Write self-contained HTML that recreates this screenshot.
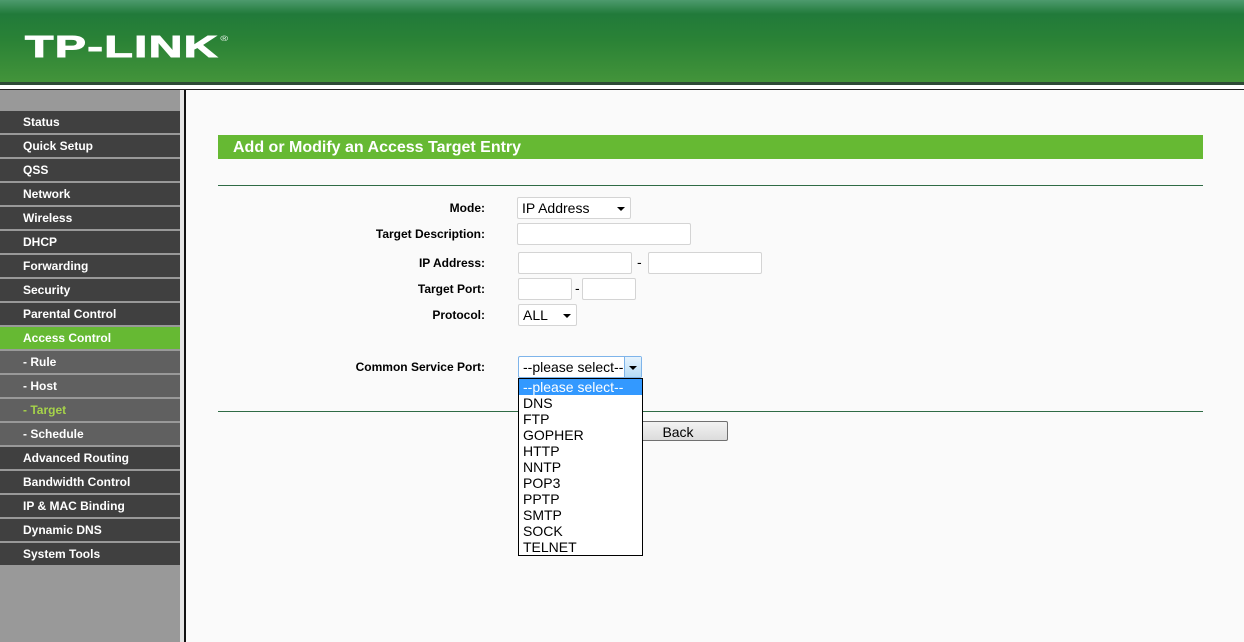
<!DOCTYPE html>
<html><head><meta charset="utf-8"><style>
*{margin:0;padding:0;box-sizing:border-box}
body{width:1244px;height:642px;overflow:hidden;background:#fafafa;font-family:"Liberation Sans",Arial,sans-serif;position:relative}
#hdr{position:absolute;left:0;top:0;width:1244px;height:82px;background:linear-gradient(#4d9a6e 0px,#217a3a 14px,#2a8236 40px,#43943a 82px)}
#logo{position:absolute;left:25px;top:29px;color:#fff;font:bold 31px "Liberation Sans",sans-serif;letter-spacing:1px;-webkit-text-stroke:1px #fff;transform:scaleX(1.5);transform-origin:left;white-space:nowrap}
#logo sup{font-size:7px;font-weight:normal;-webkit-text-stroke:0;vertical-align:16px;margin-left:1px}
#l1{position:absolute;top:82px;left:0;width:1244px;height:3px;background:#2d4a36}
#l2{position:absolute;top:85px;left:0;width:1244px;height:4px;background:#fff}
#l3{position:absolute;top:89px;left:0;width:1244px;height:1px;background:#222}
#side{position:absolute;left:0;top:90px;width:180px;height:552px;background:#999}
#sep1{position:absolute;left:180px;top:90px;width:4px;height:552px;background:#e4e4e4}
#sep2{position:absolute;left:184px;top:90px;width:2px;height:552px;background:#111}
.m{position:absolute;left:0;width:180px;height:22px;background:#404040;color:#fff;font-weight:bold;font-size:12px;line-height:22px;padding-left:23px}
.s{background:#606060}
.a{background:#66b933}
.t{color:#a6d34a}
#title{position:absolute;left:218px;top:135px;width:985px;height:24px;background:#66b933;color:#fff;font-weight:bold;font-size:16px;line-height:25px;padding-left:15px}
.hr{position:absolute;left:218px;width:985px;height:1px;background:#2f6b45}
.lb{position:absolute;right:759px;font-weight:bold;font-size:12px;color:#000}
.in{position:absolute;height:22px;border:1px solid #d4d4d4;background:#fff;border-radius:2px}
.sel{position:absolute;height:22px;border:1px solid #d4d4d4;background:#fff;font-size:14px;line-height:20px;padding-left:4px;border-radius:2px}
.arr{position:absolute;right:5px;top:9px;width:0;height:0;border-left:4px solid transparent;border-right:4px solid transparent;border-top:4px solid #000}
.dash{position:absolute;font-size:14px}
#dd{position:absolute;left:518px;top:378px;width:125px;height:178px;border:1px solid #000;background:#fff}
#dd div{height:16px;font-size:14px;line-height:16px;padding-left:4px}
#btn{position:absolute;left:628px;top:421px;width:100px;height:20px;border:1px solid #707070;border-radius:2px;background:linear-gradient(#f2f2f2,#dcdcdc);font-size:14px;line-height:20px;text-align:center}
</style></head><body>
<div id="hdr"><div id="logo">TP-LINK<sup>®</sup></div></div>
<div id="l1"></div><div id="l2"></div><div id="l3"></div>
<div id="side"></div><div id="sep1"></div><div id="sep2"></div>
<div class="m" style="top:111px">Status</div>
<div class="m" style="top:135px">Quick Setup</div>
<div class="m" style="top:159px">QSS</div>
<div class="m" style="top:183px">Network</div>
<div class="m" style="top:207px">Wireless</div>
<div class="m" style="top:231px">DHCP</div>
<div class="m" style="top:255px">Forwarding</div>
<div class="m" style="top:279px">Security</div>
<div class="m" style="top:303px">Parental Control</div>
<div class="m a" style="top:327px">Access Control</div>
<div class="m s" style="top:351px">- Rule</div>
<div class="m s" style="top:375px">- Host</div>
<div class="m s t" style="top:399px">- Target</div>
<div class="m s" style="top:423px">- Schedule</div>
<div class="m" style="top:447px">Advanced Routing</div>
<div class="m" style="top:471px">Bandwidth Control</div>
<div class="m" style="top:495px">IP &amp; MAC Binding</div>
<div class="m" style="top:519px">Dynamic DNS</div>
<div class="m" style="top:543px">System Tools</div>

<div id="title">Add or Modify an Access Target Entry</div>
<div class="hr" style="top:185px"></div>
<div class="lb" style="top:201px">Mode:</div>
<div class="lb" style="top:227px">Target Description:</div>
<div class="lb" style="top:256px">IP Address:</div>
<div class="lb" style="top:282px">Target Port:</div>
<div class="lb" style="top:308px">Protocol:</div>
<div class="lb" style="top:360px">Common Service Port:</div>

<div class="sel" style="left:517px;top:197px;width:114px">IP Address<div class="arr"></div></div>
<div class="in" style="left:517px;top:223px;width:174px"></div>
<div class="in" style="left:518px;top:252px;width:114px"></div>
<div class="dash" style="left:637px;top:254px">-</div>
<div class="in" style="left:648px;top:252px;width:114px"></div>
<div class="in" style="left:518px;top:278px;width:54px"></div>
<div class="dash" style="left:575px;top:280px">-</div>
<div class="in" style="left:582px;top:278px;width:54px"></div>
<div class="sel" style="left:518px;top:304px;width:59px">ALL<div class="arr"></div></div>
<div class="sel" style="left:518px;top:356px;width:124px;border-color:#7eb4ea">--please select--<div style="position:absolute;right:0;top:0;width:17px;height:20px;background:linear-gradient(#e6f3fd,#b6dcf6);border-left:1px solid #7eb4ea"><div class="arr" style="right:4px"></div></div></div>

<div class="hr" style="top:411px"></div>
<div id="btn">Back</div>
<div id="dd">
<div style="background:#3399ff;color:#fff">--please select--</div>
<div>DNS</div><div>FTP</div><div>GOPHER</div><div>HTTP</div><div>NNTP</div><div>POP3</div><div>PPTP</div><div>SMTP</div><div>SOCK</div><div>TELNET</div>
</div>
</body></html>
